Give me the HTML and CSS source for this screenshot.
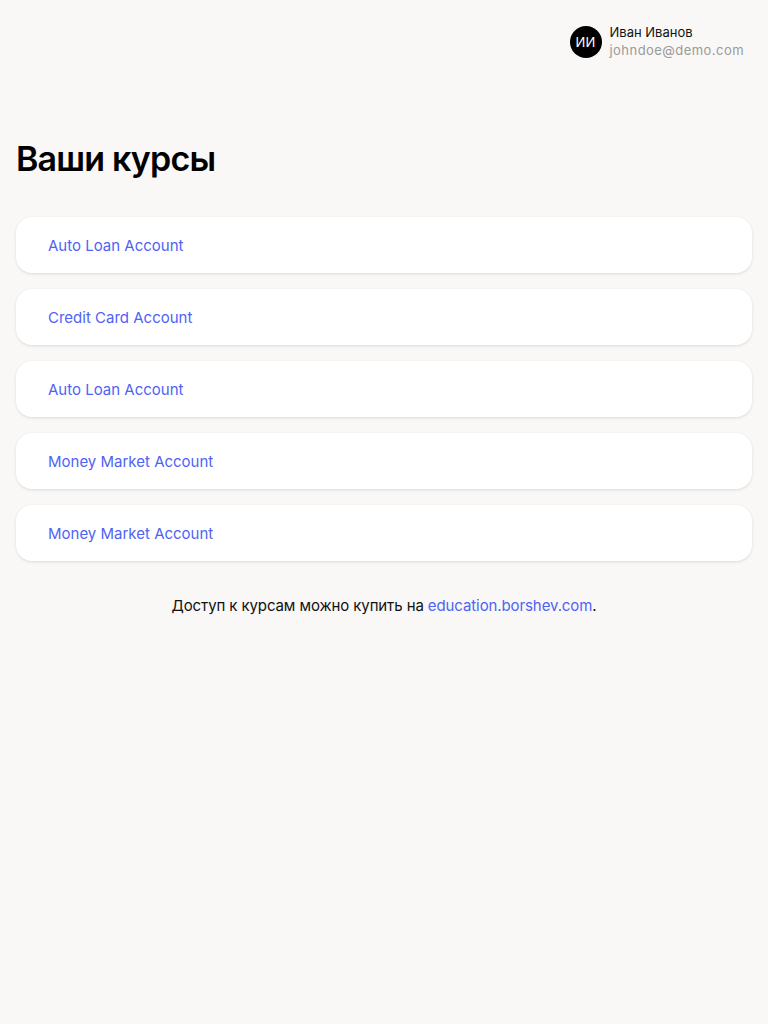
FILE: index.html
```html
<!DOCTYPE html>
<html lang="ru">
<head>
<meta charset="utf-8">
<title>Ваши курсы</title>
<link rel="stylesheet" href="styles.css">
</head>
<body>
<header class="topbar">
  <div class="user">
    <div class="avatar">ИИ</div>
    <div class="user-info">
      <div class="user-name">Иван Иванов</div>
      <div class="user-email">johndoe@demo.com</div>
    </div>
  </div>
</header>
<main class="content">
  <h1 class="title">Ваши курсы</h1>
  <ul class="courses">
    <li class="course"><a href="#">Auto Loan Account</a></li>
    <li class="course"><a href="#">Credit Card Account</a></li>
    <li class="course"><a href="#">Auto Loan Account</a></li>
    <li class="course"><a href="#">Money Market Account</a></li>
    <li class="course"><a href="#">Money Market Account</a></li>
  </ul>
  <p class="note">Доступ к курсам можно купить на <a href="#">education.borshev.com</a>.</p>
</main>
</body>
</html>
```
FILE: styles.css
```css
* { box-sizing: border-box; }
html, body { margin: 0; padding: 0; }
body {
  background: #f9f8f6;
  font-family: Inter, "Noto Sans", sans-serif;
  color: #111;
  min-height: 1024px;
}
.topbar {
  display: flex;
  justify-content: flex-end;
  padding: 26px 24px 0 16px;
}
.user {
  display: flex;
  align-items: center;
  gap: 8px;
}
.avatar {
  width: 32px;
  height: 32px;
  border-radius: 50%;
  background: #000;
  color: #fff;
  font-size: 13px;
  display: flex;
  align-items: center;
  justify-content: center;
  letter-spacing: 0.3px;
}
.user-info {
  display: flex;
  flex-direction: column;
  gap: 2px;
  font-size: 13px;
  line-height: 16px;
  margin-top: -2px;
}
.user-name { color: #111; }
.user-email { color: #9a9a9a; letter-spacing: 0.45px; }
.content {
  padding: 0 16px;
}
.title {
  margin: 79px 0 0;
  font-size: 34px;
  line-height: 44px;
  font-weight: 600;
  letter-spacing: -0.8px;
  color: #000;
}
.courses {
  list-style: none;
  margin: 36px 0 0;
  padding: 0;
  display: flex;
  flex-direction: column;
  gap: 16px;
}
.course {
  background: #fff;
  border-radius: 16px;
  height: 56px;
  display: flex;
  align-items: center;
  padding: 0 32px;
  box-shadow: 0 1px 3px rgba(0, 0, 0, 0.12);
}
.course a, .note a {
  color: #4f63f5;
  text-decoration: none;
}
.course a { font-size: 15px; }
.note {
  margin: 35px 0 0;
  text-align: center;
  font-size: 15px;
  line-height: 20px;
  letter-spacing: -0.1px;
  color: #111;
}
```
